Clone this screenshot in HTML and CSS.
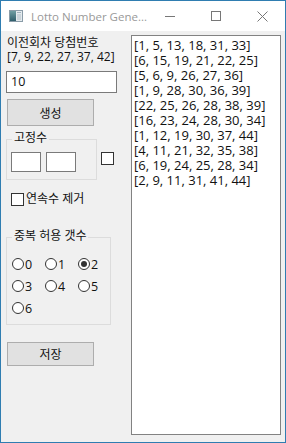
FILE: index.html
```html
<!DOCTYPE html>
<html lang="ko">
<head>
  <meta charset="UTF-8" />
  <title>Lotto Number Generator</title>
  <link rel="stylesheet" href="styles.css">
</head>
<body>

<div class="window">
  <div class="titlebar">
    <svg class="app-icon" width="14" height="12" viewBox="0 0 14 12">
      <defs>
        <linearGradient id="pane" x1="0" y1="0" x2="0" y2="1">
          <stop offset="0" stop-color="#6f9ea3" />
          <stop offset="1" stop-color="#2f5e6c" />
        </linearGradient>
      </defs>
      <rect x="0.5" y="0.5" width="13" height="11" fill="#e4eaee" stroke="#8a9ca8" />
      <rect x="1" y="1" width="6" height="10" fill="url(#pane)" />
      <rect x="8" y="2" width="4" height="1" fill="#9fb1bc" />
      <rect x="8" y="4" width="4" height="6" fill="#c9d4da" />
    </svg>
    <span class="title">Lotto Number Gene...</span>
    <div class="controls">
      <span class="ctl">
        <svg width="10" height="10" viewBox="0 0 10 10"><path d="M0 5.5H10" stroke="#777" /></svg>
      </span>
      <span class="ctl">
        <svg width="10" height="10" viewBox="0 0 10 10"><rect x="0.5" y="0.5" width="9" height="9" fill="none" stroke="#777" /></svg>
      </span>
      <span class="ctl">
        <svg width="11" height="11" viewBox="0 0 11 11"><path d="M0.5 0.5L10.5 10.5M10.5 0.5L0.5 10.5" stroke="#777" /></svg>
      </span>
    </div>
  </div>

  <div class="client">
    <div class="side">
      <div class="prev">
        <div>이전회차 당첨번호</div>
        <div>[7, 9, 22, 27, 37, 42]</div>
      </div>

      <div class="textbox count">10</div>

      <button class="btn generate">생성</button>

      <div class="fixed-row">
        <div class="group fixed">
          <div class="group-title">고정수</div>
          <div class="fixed-inputs">
            <div class="textbox small"></div>
            <div class="textbox small"></div>
          </div>
        </div>
        <span class="box fixed-check"></span>
      </div>

      <div class="check-row">
        <span class="box"></span>
        <span>연속수 제거</span>
      </div>

      <div class="group dup">
        <div class="group-title">중복 허용 갯수</div>
        <div class="radios">
          <div class="radio"><span class="dot"></span>0</div>
          <div class="radio"><span class="dot"></span>1</div>
          <div class="radio"><span class="dot on"></span>2</div>
          <div class="radio"><span class="dot"></span>3</div>
          <div class="radio"><span class="dot"></span>4</div>
          <div class="radio"><span class="dot"></span>5</div>
          <div class="radio"><span class="dot"></span>6</div>
        </div>
      </div>

      <button class="btn save">저장</button>
    </div>

    <div class="listbox">
      <div class="item">[1, 5, 13, 18, 31, 33]</div>
      <div class="item">[6, 15, 19, 21, 22, 25]</div>
      <div class="item">[5, 6, 9, 26, 27, 36]</div>
      <div class="item">[1, 9, 28, 30, 36, 39]</div>
      <div class="item">[22, 25, 26, 28, 38, 39]</div>
      <div class="item">[16, 23, 24, 28, 30, 34]</div>
      <div class="item">[1, 12, 19, 30, 37, 44]</div>
      <div class="item">[4, 11, 21, 32, 35, 38]</div>
      <div class="item">[6, 19, 24, 25, 28, 34]</div>
      <div class="item">[2, 9, 11, 31, 41, 44]</div>
    </div>
  </div>
</div>

</body>
</html>
```

FILE: styles.css
```css
html, body {
  margin: 0;
  padding: 0;
  background: #fff;
}

body {
  font-family: "Open Sans", "Noto Sans CJK KR", sans-serif;
  font-size: 12px;
  color: #111;
}

.window {
  width: 286px;
  height: 443px;
  box-sizing: border-box;
  border: 1px solid #2f7db1;
  background: #f0f0f0;
  display: flex;
  flex-direction: column;
}

/* title bar */
.titlebar {
  height: 30px;
  flex-shrink: 0;
  background: #fff;
  display: flex;
  align-items: center;
}

.app-icon {
  margin-left: 8px;
  flex-shrink: 0;
}

.title {
  margin-left: 8px;
  font-size: 11.5px;
  color: #999;
  white-space: nowrap;
}

.controls {
  margin-left: auto;
  display: flex;
  flex-shrink: 0;
}

.ctl {
  width: 46px;
  height: 30px;
  display: flex;
  align-items: center;
  justify-content: center;
}

/* client area */
.client {
  flex: 1;
  display: flex;
}

.side {
  width: 130px;
  flex-shrink: 0;
}

.prev {
  margin: 5px 0 0 6px;
  line-height: 14px;
}

.textbox {
  box-sizing: border-box;
  border: 1px solid #7a7a7a;
  background: #fff;
}

.count {
  margin: 7px 0 0 5px;
  width: 111px;
  height: 22px;
  padding-left: 4px;
  line-height: 20px;
  font-size: 12.5px;
}

.btn {
  display: block;
  margin-left: 6px;
  width: 87px;
  padding: 0;
  border: 1px solid #adadad;
  background: #e1e1e1;
  font: inherit;
  color: #111;
}

.generate {
  margin-top: 6px;
  height: 27px;
}

.save {
  margin-top: 17px;
  height: 24px;
}

/* group boxes */
.group {
  border: 1px solid #dcdcdc;
  box-sizing: border-box;
}

.group-title {
  display: table;
  margin: -9px 0 0 5px;
  padding: 0 2px;
  line-height: 14px;
  background: #f0f0f0;
}

.fixed-row {
  display: flex;
  align-items: flex-start;
  margin-top: 13px;
}

.fixed {
  margin-left: 5px;
  width: 91px;
}

.fixed-inputs {
  display: flex;
  gap: 5px;
  margin: 7px 0 7px 4px;
}

.small {
  width: 30px;
  height: 20px;
}

.box {
  display: inline-block;
  width: 13px;
  height: 13px;
  box-sizing: border-box;
  border: 1px solid #333;
  background: #fff;
}

.fixed-check {
  margin: 13px 0 0 4px;
}

.check-row {
  display: flex;
  align-items: center;
  gap: 2px;
  margin: 12px 0 0 10px;
  line-height: 14px;
}

.dup {
  margin: 31px 0 0 5px;
  width: 105px;
}

.radios {
  display: grid;
  grid-template-columns: 33px 33px 33px;
  grid-auto-rows: 22px;
  margin: 10px 0 5px 5px;
  font-size: 12.5px;
}

.radio {
  display: flex;
  align-items: center;
  gap: 1px;
}

.dot {
  width: 12px;
  height: 12px;
  box-sizing: border-box;
  border: 1px solid #333;
  border-radius: 50%;
  background: #fff;
  display: flex;
  align-items: center;
  justify-content: center;
}

.dot.on::after {
  content: "";
  width: 6px;
  height: 6px;
  border-radius: 50%;
  background: #333;
}

/* result list */
.listbox {
  margin-top: 4px;
  width: 150px;
  height: 400px;
  box-sizing: border-box;
  border: 1px solid #828282;
  background: #fff;
  padding: 2px 0 0 2px;
  font-size: 13px;
  line-height: 15px;
}
```
